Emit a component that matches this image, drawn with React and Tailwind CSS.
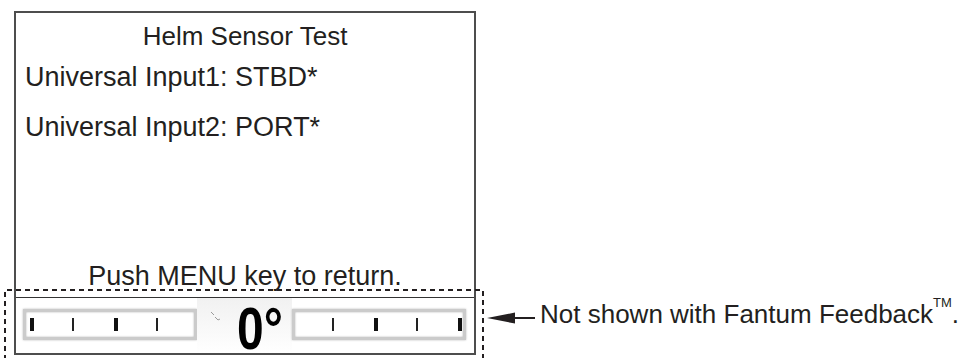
import React from 'react'

const ink = 'text-[#231f20]'

function Tick({ thick }) {
  return (
    <div className="w-[42px] shrink-0 flex">
      <div className={thick ? 'w-[4px] h-[13px] bg-[#111]' : 'w-[1.5px] h-[13px] bg-[#222]'} />
    </div>
  )
}

function Scale({ ticks, className }) {
  return (
    <div
      className={
        'w-[174px] h-[31px] border-[3px] border-[#cbcbcb] shadow-[inset_0_0_2px_#aaa,0_0_2px_#bbb] bg-white flex items-center ' +
        className
      }
    >
      {ticks.map((t, i) => (
        <Tick key={i} thick={t} />
      ))}
    </div>
  )
}

// small faint rudder-direction glyph left of the angle readout
function RudderGlyph() {
  return (
    <svg width="12" height="12" viewBox="0 0 12 12" className="mt-[13px] ml-[12px] shrink-0">
      <path d="M2 1 L5 4 M6 6 L9 9 M9 9 L11 8" stroke="#9a9a9a" strokeWidth="1" fill="none" />
    </svg>
  )
}

function Gauge() {
  return (
    <div className="h-[55px] flex items-start pl-[7px]">
      <Scale ticks={[true, false, true, false]} className="mt-[11px] pl-[4px]" />
      <div className="w-[95px] self-stretch flex items-start bg-gradient-to-b from-[#f1f1f1] to-white">
        <RudderGlyph />
        <span className="ml-[16px] mt-[9px] inline-block origin-left scale-x-[0.8] whitespace-nowrap leading-[44px] font-bold text-[60px] text-black">
          0°
        </span>
      </div>
      <Scale ticks={[false, true, false, true]} className="mt-[11px] pl-[37px]" />
    </div>
  )
}

function Annotation() {
  return (
    <div className="flex items-center ml-[11px] mb-[26px]">
      <svg width="48" height="12" viewBox="0 0 48 12" className="mt-[8px]">
        <polygon points="0,6 28,0.5 28,11.5" fill="#231f20" />
        <rect x="20" y="5" width="28" height="2" fill="#231f20" />
      </svg>
      <span className={'ml-[5px] text-[26px] leading-[30px] ' + ink}>
        Not shown with Fantum Feedback<sup className="text-[13px] align-[10px]">TM</sup>.
      </span>
    </div>
  )
}

export default function App() {
  return (
    <div
      className="relative w-[973px] h-[358px] bg-white overflow-hidden"
      style={{ fontFamily: '"Liberation Sans", Arial, sans-serif' }}
    >
      <div className="flex items-end pt-[11px] pl-[14px]">
        <div className="w-[462px] h-[344px] border-2 border-[#4d4d4d] flex flex-col">
          <div className={'pt-[8px] text-center text-[26px] leading-[30px] ' + ink}>Helm Sensor Test</div>
          <div className={'mt-[11px] pl-[9px] text-[27px] leading-[30px] ' + ink}>Universal Input1: STBD*</div>
          <div className={'mt-[20px] pl-[9px] text-[27px] leading-[30px] ' + ink}>Universal Input2: PORT*</div>
          <div className="flex-1" />
          <div className={'text-center text-[27px] leading-[30px] mb-[6px] ' + ink}>Push MENU key to return.</div>
          <div className="border-t-[1.5px] border-[#333]" />
          <Gauge />
        </div>
        <Annotation />
      </div>
      {/* dashed callout frame around the gauge strip */}
      <svg className="absolute left-[4px] top-[289px]" width="480" height="80">
        <path d="M1 80 V1 H479 V80" fill="none" stroke="#231f20" strokeWidth="2" strokeDasharray="5 4" />
      </svg>
    </div>
  )
}
